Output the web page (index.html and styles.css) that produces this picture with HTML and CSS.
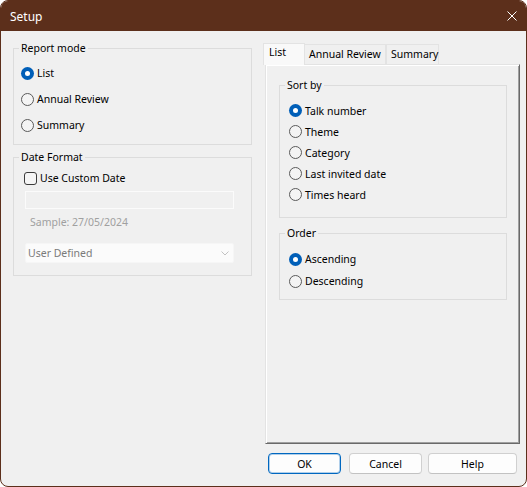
FILE: index.html
```html
<!DOCTYPE html>
<html>
<head>
<meta charset="utf-8">
<title>Setup</title>
<link rel="stylesheet" href="styles.css">
</head>
<body>
<div class="window">
  <div class="titlebar">
    <span class="title">Setup</span>
    <svg class="close" width="10" height="10" viewBox="0 0 10 10"><path d="M0.5 0.5 L9.5 9.5 M9.5 0.5 L0.5 9.5" stroke="#fff" stroke-width="1" fill="none"/></svg>
  </div>
  <div class="content">
    <div class="left">
      <fieldset class="group">
        <legend>Report mode</legend>
        <div class="gbody gbody-mode">
          <div class="radio-row mode-row"><span class="radio on"></span>List</div>
          <div class="radio-row mode-row"><span class="radio"></span>Annual Review</div>
          <div class="radio-row mode-row"><span class="radio"></span>Summary</div>
        </div>
      </fieldset>
      <fieldset class="group group-date">
        <legend>Date Format</legend>
        <div class="gbody gbody-date">
          <div class="check-row"><span class="check"></span>Use Custom Date</div>
          <div class="textbox"></div>
          <div class="sample">Sample: 27/05/2024</div>
          <div class="combo">
            <span class="combo-text">User Defined</span>
            <svg class="chev" width="8" height="5" viewBox="0 0 8 5"><path d="M0.5 0.5 L4 4 L7.5 0.5" stroke="#c2c2c2" stroke-width="1" fill="none"/></svg>
          </div>
        </div>
      </fieldset>
    </div>
    <div class="right">
      <div class="tabs">
        <div class="tab active">List</div>
        <div class="tab tab-annual">Annual Review</div>
        <div class="tab tab-summary">Summary</div>
      </div>
      <div class="panel">
        <fieldset class="group group-sort">
          <legend>Sort by</legend>
          <div class="gbody gbody-sort">
            <div class="radio-row sort-row"><span class="radio on"></span>Talk number</div>
            <div class="radio-row sort-row"><span class="radio"></span>Theme</div>
            <div class="radio-row sort-row"><span class="radio"></span>Category</div>
            <div class="radio-row sort-row"><span class="radio"></span>Last invited date</div>
            <div class="radio-row sort-row"><span class="radio"></span>Times heard</div>
          </div>
        </fieldset>
        <fieldset class="group group-order">
          <legend>Order</legend>
          <div class="gbody gbody-order">
            <div class="radio-row order-row"><span class="radio on"></span>Ascending</div>
            <div class="radio-row order-row"><span class="radio"></span>Descending</div>
          </div>
        </fieldset>
      </div>
      <div class="buttons">
        <div class="btn btn-default">OK</div>
        <div class="btn btn-cancel">Cancel</div>
        <div class="btn btn-help">Help</div>
      </div>
    </div>
  </div>
</div>
</body>
</html>
```
FILE: styles.css
```css
* { box-sizing: border-box; }
html, body { margin: 0; padding: 0; background: #ffffff; }
body {
  font-family: "Noto Sans", "DejaVu Sans", sans-serif;
  font-size: 10.5px;
  color: #000;
}
.window {
  width: 527px;
  height: 487px;
  border: 1px solid #5c2f1b;
  border-radius: 8px;
  background: #f0f0f0;
  overflow: hidden;
  display: flex;
  flex-direction: column;
}
.titlebar {
  height: 30px;
  flex: none;
  background: #5c2f1b;
  color: #fff;
  display: flex;
  align-items: center;
  padding: 0 9px 0 9px;
}
.title { flex: 1; font-size: 12px; }
.close { display: block; }

.content { flex: 1; display: flex; }
.left { width: 251px; padding: 9px 0 0 12px; }
.right { margin-left: 11px; padding-top: 12px; display: flex; flex-direction: column; }

.group {
  margin: 0;
  padding: 0;
  min-width: 0;
  border: 1px solid #dcdcdc;
}
.group legend {
  padding: 0 2px;
  margin-left: 5px;
  line-height: 16px;
}
.gbody-mode { padding: 4px 0 6px 7px; }
.group-date { margin-top: 4px; }
.gbody-date { padding: 3px 0 12px 11px; }

.radio-row { display: flex; align-items: center; gap: 3px; }
.mode-row { height: 26px; }
.sort-row { height: 21px; }
.order-row { height: 22px; }
.radio {
  flex: none;
  width: 13px;
  height: 13px;
  border-radius: 50%;
  border: 1px solid #5a5a5a;
  background: #f4f4f4;
}
.radio.on {
  border: none;
  background: #005fb8;
  display: flex;
  align-items: center;
  justify-content: center;
}
.radio.on::after {
  content: "";
  width: 5px;
  height: 5px;
  border-radius: 50%;
  background: #fff;
}

.check-row { display: flex; align-items: center; gap: 3px; height: 20px; margin-left: -1px; }
.check {
  flex: none;
  width: 13px;
  height: 13px;
  border: 1px solid #3c3c3c;
  border-radius: 3px;
  background: #f5f5f5;
}
.textbox {
  margin-top: 3px;
  width: 209px;
  height: 18px;
  border: 1px solid #fbfbfb;
  background: #f0f0f0;
}
.sample { margin-top: 5px; line-height: 16px; color: #a0a0a0; padding-left: 5px; }
.combo {
  margin-top: 13px;
  width: 209px;
  height: 20px;
  background: #fbfbfb;
  border: 1px solid #f6f6f6;
  border-radius: 2px;
  display: flex;
  align-items: center;
  padding: 0 4px 0 2px;
}
.combo-text { flex: 1; color: #7a7a7a; }
.chev { display: block; margin-top: 1px; }

.tabs { display: flex; align-items: flex-end; height: 21px; }
.tab {
  height: 20px;
  border: 1px solid #e3e3e3;
  border-bottom: none;
  background: #f0f0f0;
  padding: 1px 0 0 4px;
  line-height: 16px;
}
.tab.active {
  width: 42px;
  height: 22px;
  margin-bottom: -1px;
  background: #f9f9f9;
  padding: 0 0 0 5px;
  position: relative;
  z-index: 1;
}
.tab-annual { width: 81px; border-left: none; }
.tab-summary { width: 53px; }

.panel {
  margin-left: 2px;
  width: 255px;
  height: 380px;
  border: 1px solid;
  border-color: #e3e3e3 #696969 #696969 #e3e3e3;
  box-shadow: inset 1px 1px 0 #ffffff, inset -1px -1px 0 #a0a0a0;
  padding: 12px 0 0 13px;
}
.group-sort, .group-order { width: 228px; }
.gbody-sort { padding: 7px 0 12px 9px; }
.group-order { margin-top: 7px; }
.gbody-order { padding: 7px 0 7px 9px; }

.buttons { display: flex; margin-top: 9px; padding-left: 5px; }
.btn {
  height: 21px;
  border: 1px solid #d0d0d0;
  border-bottom-color: #c2c2c2;
  border-radius: 4px;
  background: #fdfdfd;
  display: flex;
  align-items: center;
  justify-content: center;
}
.btn-default {
  width: 73px;
  border-color: #0067c0;
  box-shadow: inset 0 0 0 1px rgba(0, 103, 192, 0.3);
}
.btn-cancel { width: 73px; margin-left: 8px; }
.btn-help { width: 89px; margin-left: 6px; }
```
